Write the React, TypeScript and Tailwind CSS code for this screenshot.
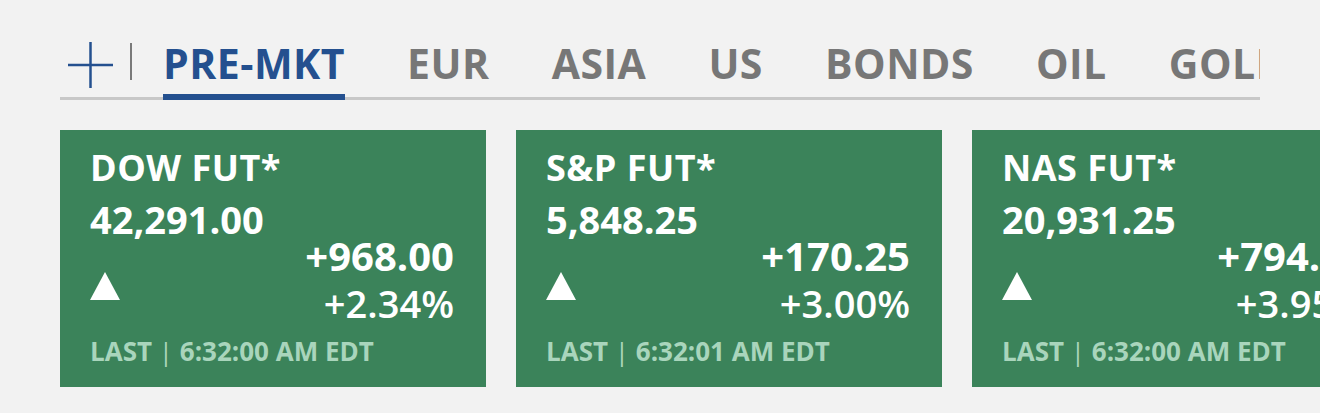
import React from 'react';

const tabs = ['PRE-MKT', 'EUR', 'ASIA', 'US', 'BONDS', 'OIL', 'GOLD', 'CRYPTO'];

const quotes = [
  { name: 'DOW FUT*', price: '42,291.00', change: '+968.00', pct: '+2.34%', time: '6:32:00 AM EDT' },
  { name: 'S&P FUT*', price: '5,848.25', change: '+170.25', pct: '+3.00%', time: '6:32:01 AM EDT' },
  { name: 'NAS FUT*', price: '20,931.25', change: '+794.50', pct: '+3.95%', time: '6:32:00 AM EDT' },
];

function QuoteCard({ q }: { q: (typeof quotes)[number] }) {
  return (
    <div className="w-[426px] h-[257px] shrink-0 bg-[#3b835a] text-white pl-[30px] pr-[32px] pt-[16px] flex flex-col">
      <div className="text-[36px] leading-[44px] font-bold tracking-[0.5px]">{q.name}</div>
      <div className="text-[38px] leading-[44px] font-bold mt-[7px]">{q.price}</div>
      <div className="flex items-center justify-between -mt-[8px]">
        <div className="w-0 h-0 border-l-[15px] border-r-[15px] border-b-[28px] border-l-transparent border-r-transparent border-b-white mt-[12px]" />
        <div className="text-right">
          <div className="text-[40px] leading-[46px] font-bold">{q.change}</div>
          <div className="text-[38px] leading-[48px] font-semibold">{q.pct}</div>
        </div>
      </div>
      <div className="mt-[8px] text-[26px] leading-[32px] font-bold text-[#a9d5bc]">
        LAST <span className="font-normal">|</span> {q.time}
      </div>
    </div>
  );
}

export default function App() {
  return (
    <div className="w-[1320px] h-[413px] overflow-hidden bg-[#f2f2f2] font-['Open_Sans','Liberation_Sans',sans-serif]">
      <div className="pl-[60px] pt-[35px]">
        <div className="w-[1200px] overflow-hidden">
          <div className="flex items-end">
            <div className="flex items-start self-start shrink-0">
              <svg width="48" height="48" viewBox="0 0 48 48" className="ml-[7px] mt-[6px]">
                <line x1="1" y1="24" x2="46" y2="24" stroke="#24508f" strokeWidth="2.5" />
                <line x1="23.5" y1="1" x2="23.5" y2="47" stroke="#24508f" strokeWidth="2.5" />
              </svg>
              <div className="w-[2px] h-[37px] bg-[#7a7a7a] ml-[15px] mt-[8px]" />
            </div>
            <div className="flex gap-[62px] ml-[31px] whitespace-nowrap">
              {tabs.map((t, i) => (
                <div
                  key={t}
                  className={
                    i === 0
                      ? 'relative z-10 text-[41px] leading-[56px] font-bold tracking-[0.5px] text-[#24508f] border-b-[8px] border-[#24508f] pb-[3px]'
                      : 'text-[41px] leading-[56px] font-bold tracking-[0.5px] text-[#777777] pb-[11px]'
                  }
                >
                  {t}
                </div>
              ))}
            </div>
          </div>
          <div className="h-[3px] bg-[#c8c8c8] -mt-[5px]" />
        </div>
        <div className="flex gap-[30px] mt-[30px]">
          {quotes.map((q) => (
            <QuoteCard key={q.name} q={q} />
          ))}
        </div>
      </div>
    </div>
  );
}
